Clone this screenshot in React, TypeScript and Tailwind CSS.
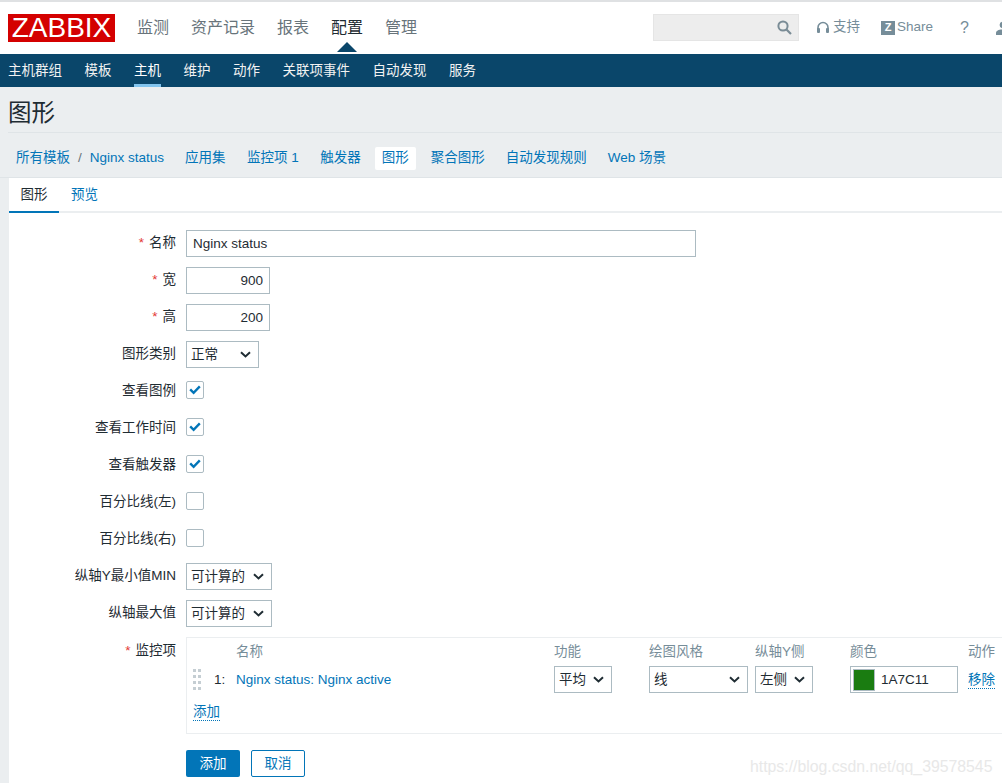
import { ReactNode } from 'react';

const mainNav = [
  { label: '监测' },
  { label: '资产记录' },
  { label: '报表' },
  { label: '配置', active: true },
  { label: '管理' },
];

const subNav = ['主机群组', '模板', '主机', '维护', '动作', '关联项事件', '自动发现', '服务'];

function Chevron() {
  return (
    <svg width="11" height="7" viewBox="0 0 11 7" className="shrink-0">
      <path d="M1 1.2 L5.5 5.4 L10 1.2" fill="none" stroke="#1f2c33" strokeWidth="2" />
    </svg>
  );
}

function Select({ value, width }: { value: string; width: string }) {
  return (
    <div className={`flex h-[27px] items-center justify-between border border-[#acbbc2] bg-white pl-[4px] pr-[7px] ${width}`}>
      <span className="pt-[1px]">{value}</span>
      <Chevron />
    </div>
  );
}

function CheckBox({ checked }: { checked?: boolean }) {
  return (
    <div className="mb-[3px] flex h-[18px] w-[18px] items-center justify-center rounded-[2px] border border-[#acbbc2] bg-white">
      {checked && (
        <svg width="12" height="10" viewBox="0 0 12 10">
          <path d="M1.2 4.4 L4.6 7.8 L10.8 1.4" fill="none" stroke="#0275b8" strokeWidth="2.4" />
        </svg>
      )}
    </div>
  );
}

function Row({ label, required, children }: { label: string; required?: boolean; children: ReactNode }) {
  return (
    <div className="flex h-[37px] items-center">
      <div className="w-[167px] shrink-0 text-right">
        {required && <span className="mr-[5px] text-[#e33734]">*</span>}
        {label}
      </div>
      <div className="ml-[10px]">{children}</div>
    </div>
  );
}

export default function App() {
  return (
    <div className="relative h-[783px] w-[1002px] overflow-hidden bg-[#ebeef0] text-[13.5px] text-[#1f2c33] [font-family:'Liberation_Sans','Noto_Sans_CJK_SC',sans-serif]">
      {/* top header */}
      <header className="flex h-[54px] items-center border-t-2 border-t-[#dfe1e3] bg-white pl-[8px]">
        <div className="flex h-[28px] w-[107px] shrink-0 items-center justify-center bg-[#d40000] text-[28px] text-white">
          ZABBIX
        </div>
        <nav className="ml-[22px] flex gap-[22px] text-[16px] text-[#68747b]">
          {mainNav.map((item) => (
            <span key={item.label} className={`relative ${item.active ? 'text-[#1f2c33]' : ''}`}>
              {item.label}
              {item.active && (
                <span className="absolute left-[6px] top-[26px] h-0 w-0 border-x-[10px] border-b-[10px] border-x-transparent border-b-[#0a466a]" />
              )}
            </span>
          ))}
        </nav>
        <div className="mb-[1px] ml-auto flex h-[27px] w-[146px] shrink-0 items-center justify-end border border-[#e5e5e5] bg-[#ededed] pr-[6px]">
          <svg width="15" height="15" viewBox="0 0 15 15">
            <circle cx="6" cy="6" r="4.6" fill="none" stroke="#7a8c96" strokeWidth="2" />
            <path d="M9.5 9.5 L14 14" stroke="#7a8c96" strokeWidth="2.2" />
          </svg>
        </div>
        <div className="mb-[1px] ml-[17px] flex shrink-0 items-center gap-[3px] text-[#768d99]">
          <svg width="14" height="14" viewBox="0 0 14 14">
            <path d="M2 9 V6.5 a5 5 0 0 1 10 0 V9" fill="none" stroke="#768d99" strokeWidth="1.6" />
            <rect x="1" y="7" width="3" height="5" rx="1" fill="#768d99" />
            <rect x="10" y="7" width="3" height="5" rx="1" fill="#768d99" />
          </svg>
          <span>支持</span>
        </div>
        <div className="mb-[1px] ml-[21px] flex shrink-0 items-center gap-[2px] text-[#768d99]">
          <div className="flex h-[14px] w-[14px] items-center justify-center bg-[#768d99] text-[11px] font-bold leading-none text-white">
            Z
          </div>
          <span>Share</span>
        </div>
        <div className="ml-[27px] shrink-0 text-[16px] text-[#768d99]">?</div>
        <svg width="14" height="14" viewBox="0 0 14 14" className="-mr-[8px] ml-[27px] shrink-0">
          <circle cx="7" cy="4" r="3.4" fill="#768d99" />
          <path d="M0 14 V12 C0 9.5 3 8.5 7 8.5 S14 9.5 14 12 V14 Z" fill="#768d99" />
        </svg>
      </header>

      {/* second level nav */}
      <nav className="flex h-[33px] gap-[22.5px] bg-[#0a466a] pl-[8px] text-[#f2f2f2]">
        {subNav.map((item) => (
          <span
            key={item}
            className={`flex h-[33px] items-center pt-[2px] ${item === '主机' ? 'border-b-[3px] border-b-[#82c4ee] pt-[5px] text-white' : ''}`}
          >
            {item}
          </span>
        ))}
      </nav>

      {/* page title */}
      <div className="ml-[8px] flex h-[46px] items-center border-b border-b-[#dfe4e7] pt-[8px]">
        <h1 className="text-[23.5px] font-normal leading-none">图形</h1>
      </div>

      {/* host navigation */}
      <div className="flex h-[45px] items-center border-b border-b-[#dfe4e7] pl-[16px] pt-[7px] text-[#0275b8]">
        <span>所有模板</span>
        <span className="mx-[8px] text-[#68747b]">/</span>
        <span>Nginx status</span>
        <span className="ml-[21px]">应用集</span>
        <span className="ml-[21.5px]">监控项 1</span>
        <span className="ml-[21.5px]">触发器</span>
        <span className="ml-[14px] flex h-[23px] w-[41px] items-center justify-center rounded-[2px] bg-white">图形</span>
        <span className="ml-[15px]">聚合图形</span>
        <span className="ml-[21px]">自动发现规则</span>
        <span className="ml-[21px]">Web 场景</span>
      </div>

      {/* form */}
      <div className="ml-[9px] h-[606px] bg-white">
        <div className="flex h-[35px] border-b-2 border-b-[#ebeef0]">
          <div className="-mb-[2px] flex w-[50px] items-center justify-center border-b-2 border-b-[#0275b8] pt-[1px]">图形</div>
          <div className="ml-[12px] flex items-center pt-[1px] text-[#0275b8]">预览</div>
        </div>

        <div className="pt-[12px]">
          <Row label="名称" required>
            <input
              readOnly
              value="Nginx status"
              className="block h-[27px] w-[510px] border border-[#acbbc2] px-[6px] outline-none"
            />
          </Row>
          <Row label="宽" required>
            <input readOnly value="900" className="block h-[27px] w-[84px] border border-[#acbbc2] px-[6px] text-right outline-none" />
          </Row>
          <Row label="高" required>
            <input readOnly value="200" className="block h-[27px] w-[84px] border border-[#acbbc2] px-[6px] text-right outline-none" />
          </Row>
          <Row label="图形类别">
            <Select value="正常" width="w-[73px]" />
          </Row>
          <Row label="查看图例">
            <CheckBox checked />
          </Row>
          <Row label="查看工作时间">
            <CheckBox checked />
          </Row>
          <Row label="查看触发器">
            <CheckBox checked />
          </Row>
          <Row label="百分比线(左)">
            <CheckBox />
          </Row>
          <Row label="百分比线(右)">
            <CheckBox />
          </Row>
          <Row label="纵轴Y最小值MIN">
            <Select value="可计算的" width="w-[86px]" />
          </Row>
          <Row label="纵轴最大值">
            <Select value="可计算的" width="w-[86px]" />
          </Row>

          <div className="mt-[5px] flex">
            <div className="w-[167px] shrink-0 pt-[4px] text-right">
              <span className="mr-[5px] text-[#e33734]">*</span>
              监控项
            </div>
            <div className="ml-[10px] h-[97px] w-[830px] shrink-0 border border-[#ebeef0]">
              <div className="grid grid-cols-[49px_318px_95px_106px_95px_118px_60px] pt-[4px] text-[#768d99]">
                <span />
                <span>名称</span>
                <span>功能</span>
                <span>绘图风格</span>
                <span>纵轴Y侧</span>
                <span>颜色</span>
                <span>动作</span>
              </div>
              <div className="mt-[4px] grid h-[27px] grid-cols-[49px_318px_95px_106px_95px_118px_60px] items-center">
                <div className="flex items-center pl-[6px]">
                  <svg width="8" height="22" viewBox="0 0 8 22" className="shrink-0">
                    <path
                      d="M0 0h3v3h-3z M5 0h3v3h-3z M0 6h3v3h-3z M5 6h3v3h-3z M0 12h3v3h-3z M5 12h3v3h-3z M0 18h3v3h-3z M5 18h3v3h-3z"
                      fill="#c5ced3"
                    />
                  </svg>
                  <span className="ml-[13px]">1:</span>
                </div>
                <span className="text-[#0275b8]">Nginx status: Nginx active</span>
                <Select value="平均" width="w-[58px]" />
                <Select value="线" width="w-[99px]" />
                <Select value="左侧" width="w-[58px]" />
                <div className="flex h-[27px] w-[108px] items-center border border-[#acbbc2] pl-[2px]">
                  <div className="h-[22px] w-[22px] border border-[#acbbc2] bg-[#1a7c11]" />
                  <span className="ml-[6px]">1A7C11</span>
                </div>
                <span className="w-fit border-b border-dotted border-b-[#0275b8] leading-[17px] text-[#0275b8]">移除</span>
              </div>
              <div className="mt-[10px] w-fit translate-x-[6px] border-b border-dotted border-b-[#0275b8] leading-[17px] text-[#0275b8]">
                添加
              </div>
            </div>
          </div>

          <div className="ml-[177px] mt-[16px] flex gap-[11px]">
            <button className="h-[27px] w-[54px] rounded-[2px] bg-[#0275b8] pt-[1px] text-white">添加</button>
            <button className="h-[27px] w-[54px] rounded-[2px] border border-[#0275b8] bg-white pt-[1px] text-[#0275b8]">取消</button>
          </div>
        </div>
      </div>

      {/* csdn watermark */}
      <div className="absolute left-[750px] top-[755px] text-[15.8px] text-[#e8e8e8]">https://blog.csdn.net/qq_39578545</div>
    </div>
  );
}
